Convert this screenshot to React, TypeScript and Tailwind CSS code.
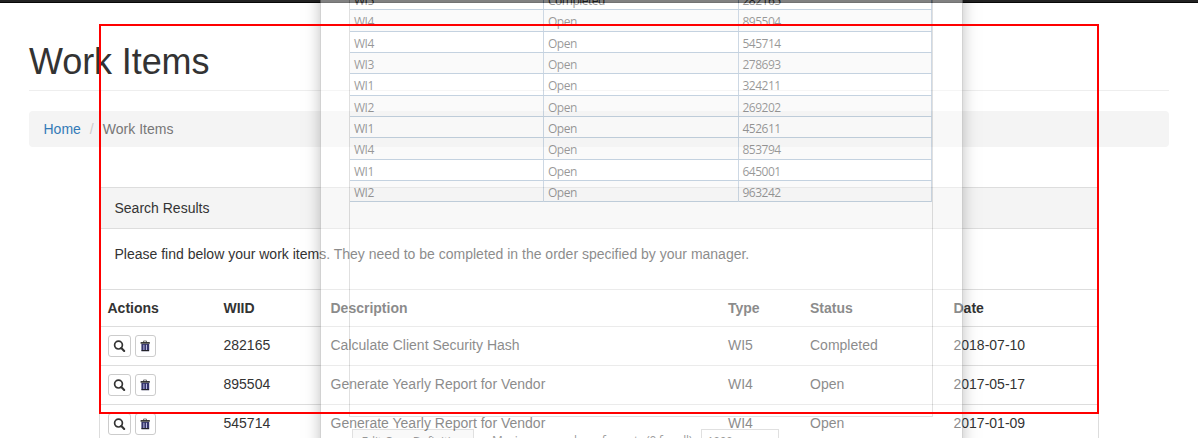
import React from "react";

const items = [
  { id: "282165", description: "Calculate Client Security Hash", type: "WI5", status: "Completed", date: "2018-07-10" },
  { id: "895504", description: "Generate Yearly Report for Vendor", type: "WI4", status: "Open", date: "2017-05-17" },
  { id: "545714", description: "Generate Yearly Report for Vendor", type: "WI4", status: "Open", date: "2017-01-09" },
];

const extracted = [
  ["WI5", "Completed", "282165"],
  ["WI4", "Open", "895504"],
  ["WI4", "Open", "545714"],
  ["WI3", "Open", "278693"],
  ["WI1", "Open", "324211"],
  ["WI2", "Open", "269202"],
  ["WI1", "Open", "452611"],
  ["WI4", "Open", "853794"],
  ["WI1", "Open", "645001"],
  ["WI2", "Open", "963242"],
];

const columns = "grid grid-cols-[115.5px_107px_397.5px_82px_143.5px_1fr]";

function SearchIcon() {
  return (
    <svg width="13" height="13" viewBox="0 0 13 13" fill="none" stroke="#333" className="mr-px shrink-0">
      <circle cx="5.5" cy="5.1" r="3.9" strokeWidth="1.7" />
      <path d="M8.3 8 11.2 10.9" strokeWidth="2.1" strokeLinecap="round" />
    </svg>
  );
}

function TrashIcon() {
  return (
    <svg width="11" height="13" viewBox="0 0 11 13" className="shrink-0">
      <path d="M3.5 2.5V1h3v1.5" fill="none" stroke="#777" strokeWidth="1" />
      <path d="M0.6 2.1h9.2v1.6H0.6z" fill="#222" />
      <path d="M1.4 4h7.8v7.2H1.4z" fill="#34346b" />
      <path d="M3.9 4.8v5.2M6.5 4.8v5.2" stroke="#c8c8ec" strokeWidth="0.9" />
      <path d="M1.6 10.6h7.4" stroke="#222" strokeWidth="1" />
    </svg>
  );
}

function ResultsPanel() {
  return (
    <section className="mx-[99px] mt-10 h-[600px] border border-[#ddd] text-[14px] leading-5">
      <div className="h-[41px] border-b border-[#ddd] bg-[#f4f4f4] px-[14.5px] py-[10px]">Search Results</div>
      <p className="h-[60px] px-[14.5px] pt-[15px]">
        Please find below your work items. They need to be completed in the order specified by your manager.
      </p>
      <div className={columns + " h-[37px] border-t border-[#ddd] pt-2 font-bold"}>
        <span className="pl-[7.5px]">Actions</span>
        <span className="pl-2">WIID</span>
        <span className="pl-2">Description</span>
        <span className="pl-2">Type</span>
        <span className="pl-2">Status</span>
        <span className="pl-2">Date</span>
      </div>
      {items.map((item) => (
        <div key={item.id} className={columns + " h-[39px] border-t border-[#ddd] pt-2"}>
          <span className="flex gap-1 pl-2">
            <button className="flex h-[22px] w-[23px] items-center justify-center rounded-[3px] border border-[#ccc] bg-white">
              <SearchIcon />
            </button>
            <button className="flex h-[22px] w-[21px] items-center justify-center rounded-[3px] border border-[#ccc] bg-white">
              <TrashIcon />
            </button>
          </span>
          <span className="pl-2">{item.id}</span>
          <span className="pl-2">{item.description}</span>
          <span className="pl-2">{item.type}</span>
          <span className="pl-2">{item.status}</span>
          <span className="pl-2">{item.date}</span>
        </div>
      ))}
    </section>
  );
}

function GhostWindow() {
  return (
    <div className="absolute left-[320px] top-[-40px] h-[520px] w-[643px] border border-[#999] bg-white px-[28px] pt-[26px] font-['Open_Sans','Noto_Sans',sans-serif] text-[12px] tracking-[-0.5px] text-[#101010] opacity-[0.43] shadow-[0_0_13px_1px_rgba(0,0,0,0.5)]">
      <div className="h-[430px] w-[584px] border border-[#b8b8b8]">
        <div className="h-[0.9px]" />
        {extracted.map((row, index) => (
          <div
            key={row[2]}
            className={
              "grid h-[21.37px] w-[582px] grid-cols-[194px_194.5px_193.5px] border-b border-[#7898b8] leading-[23px] " +
              (index % 2 ? "bg-[#f5f5f5]" : "bg-white")
            }
          >
            {row.map((cell) => (
              <span key={cell} className="h-[20.4px] border-r border-[#8ca6c2] pl-1">
                {cell}
              </span>
            ))}
          </div>
        ))}
      </div>
      <div className="mt-3 flex w-[600px] items-start whitespace-nowrap pl-[3px] leading-[23px]">
        <span className="h-[26px] w-[122px] border border-[#b8b8b8] bg-[#f2f2f2] text-center tracking-[-0.3px]">Edit Case Definition</span>
        <span className="w-[227px] pl-[18px] tracking-[-0.3px]">Maximum number of events (0 for all):</span>
        <span className="h-[26px] w-[78px] border border-[#b8b8b8] pl-[5px]">1000</span>
      </div>
    </div>
  );
}

export default function App() {
  return (
    <div className="relative h-[438px] w-[1198px] overflow-hidden bg-white font-['Liberation_Sans',Arial,sans-serif] text-[#333]">
      <nav className="h-[3px] border-b border-[#080808] bg-[#222]" />
      <header className="mx-[29px] h-[88px] border-b border-[#eee] pt-[39px]">
        <h1 className="text-[36px] leading-[40px] tracking-[-0.1px]">Work Items</h1>
      </header>
      <nav className="mx-[29px] mt-5 flex h-9 items-center rounded bg-[#f4f4f4] pl-[14.5px] text-[14px] leading-5">
        <span className="text-[#337ab7]">Home</span>
        <span className="w-[22px] pl-[9px] text-[#ccc]">/</span>
        <span className="text-[#777]">Work Items</span>
      </nav>
      <ResultsPanel />
      <GhostWindow />
      <div className="pointer-events-none absolute left-[99px] top-[24px] h-[390px] w-[1000px] border-2 border-[#ff0000]" />
    </div>
  );
}
